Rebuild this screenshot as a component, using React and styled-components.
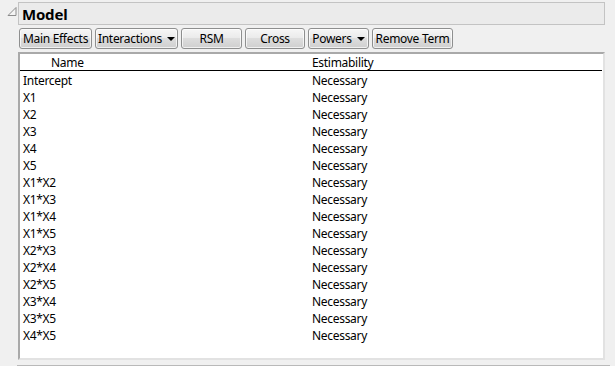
import React from "react";
import styled, { createGlobalStyle } from "styled-components";

const Global = createGlobalStyle`
  html, body { margin: 0; padding: 0; background: #f0f0f0; }
  body { font-family: "Segoe UI", "Noto Sans", "DejaVu Sans", sans-serif; color: #000; }
`;

const Page = styled.div`
  width: 615px;
  height: 366px;
  padding-top: 2px;
  box-sizing: border-box;
  overflow: hidden;
`;

const TitleRow = styled.div`
  display: flex;
  align-items: flex-start;
`;

const Toggle = styled.div`
  width: 18px;
  height: 23px;
  display: flex;
  padding-top: 5px;
  box-sizing: border-box;
`;

const TitleBox = styled.div`
  width: 587px;
  height: 23px;
  box-sizing: border-box;
  background: #ebebeb;
  border: 1px solid #c3c3c3;
  padding-left: 3px;
  display: flex;
  align-items: center;
  font-family: "Noto Sans", sans-serif;
  font-weight: 700;
  font-size: 15px;
  letter-spacing: -0.2px;
`;

const Body = styled.div`
  margin-left: 17px;
  width: 593px;
  height: 341px;
  box-sizing: border-box;
  border-bottom: 1px solid #b9b9b9;
  padding-top: 3px;
`;

const Toolbar = styled.div`
  display: flex;
  gap: 3px;
  padding-left: 2px;
`;

const Button = styled.div`
  width: ${(p) => p.$w}px;
  height: 21px;
  box-sizing: border-box;
  border: 1px solid #8e8f8f;
  border-radius: 3px;
  background: linear-gradient(#f6f6f6 0%, #ebebeb 45%, #dddddd 50%, #cfcfcf 100%);
  box-shadow: inset 0 0 0 1px rgba(255,255,255,0.7);
  display: flex;
  align-items: center;
  justify-content: center;
  gap: 5px;
  font-size: 12px;
  font-family: "Noto Sans", sans-serif;
  letter-spacing: -0.3px;
  white-space: nowrap;
`;

const Caret = styled.span`
  width: 0;
  height: 0;
  border-left: 4px solid transparent;
  border-right: 4px solid transparent;
  border-top: 4px solid #000;
  margin-top: 1px;
`;

const Table = styled.div`
  margin: 3px 0 0 1px;
  width: 587px;
  height: 308px;
  box-sizing: border-box;
  background: #fff;
  border-top: 2px solid #a9a9a9;
  border-left: 2px solid #a9a9a9;
  border-right: 2px solid #e2e2e2;
  border-bottom: 2px solid #e2e2e2;
  font-family: "Noto Sans", sans-serif;
  font-size: 12px;
  letter-spacing: -0.3px;
`;

const Row = styled.div`
  display: grid;
  grid-template-columns: 289px 1fr;
  height: 17px;
  padding-left: 3px;
  line-height: 19px;
`;

const HeadRow = styled(Row)`
  height: 16px;
  line-height: 17px;
  border-bottom: 1px solid #000;
  margin-right: 1px;
`;

const HeadName = styled.span`
  padding-left: 28px;
`;

const TriIcon = () => (
  <svg width="10" height="10" viewBox="0 0 10 10" style={{ marginLeft: 7 }}>
    <path d="M9 0.5 L9 8.5 L1 8.5 Z" fill="#f4f4f4" stroke="#8c8c8c" strokeWidth="1" />
  </svg>
);

const buttons = [
  { label: "Main Effects", w: 73 },
  { label: "Interactions", w: 83, menu: true },
  { label: "RSM", w: 61 },
  { label: "Cross", w: 60 },
  { label: "Powers", w: 61, menu: true },
  { label: "Remove Term", w: 81 },
];

const terms = [
  "Intercept", "X1", "X2", "X3", "X4", "X5",
  "X1*X2", "X1*X3", "X1*X4", "X1*X5",
  "X2*X3", "X2*X4", "X2*X5", "X3*X4", "X3*X5", "X4*X5",
];

export default function App() {
  return (
    <Page>
      <Global />
      <TitleRow>
        <Toggle><TriIcon /></Toggle>
        <TitleBox>Model</TitleBox>
      </TitleRow>
      <Body>
        <Toolbar>
          {buttons.map((b) => (
            <Button key={b.label} $w={b.w}>
              <span>{b.label}</span>
              {b.menu && <Caret />}
            </Button>
          ))}
        </Toolbar>
        <Table>
          <HeadRow>
            <HeadName>Name</HeadName>
            <span>Estimability</span>
          </HeadRow>
          {terms.map((t) => (
            <Row key={t}>
              <span>{t}</span>
              <span>Necessary</span>
            </Row>
          ))}
        </Table>
      </Body>
    </Page>
  );
}
